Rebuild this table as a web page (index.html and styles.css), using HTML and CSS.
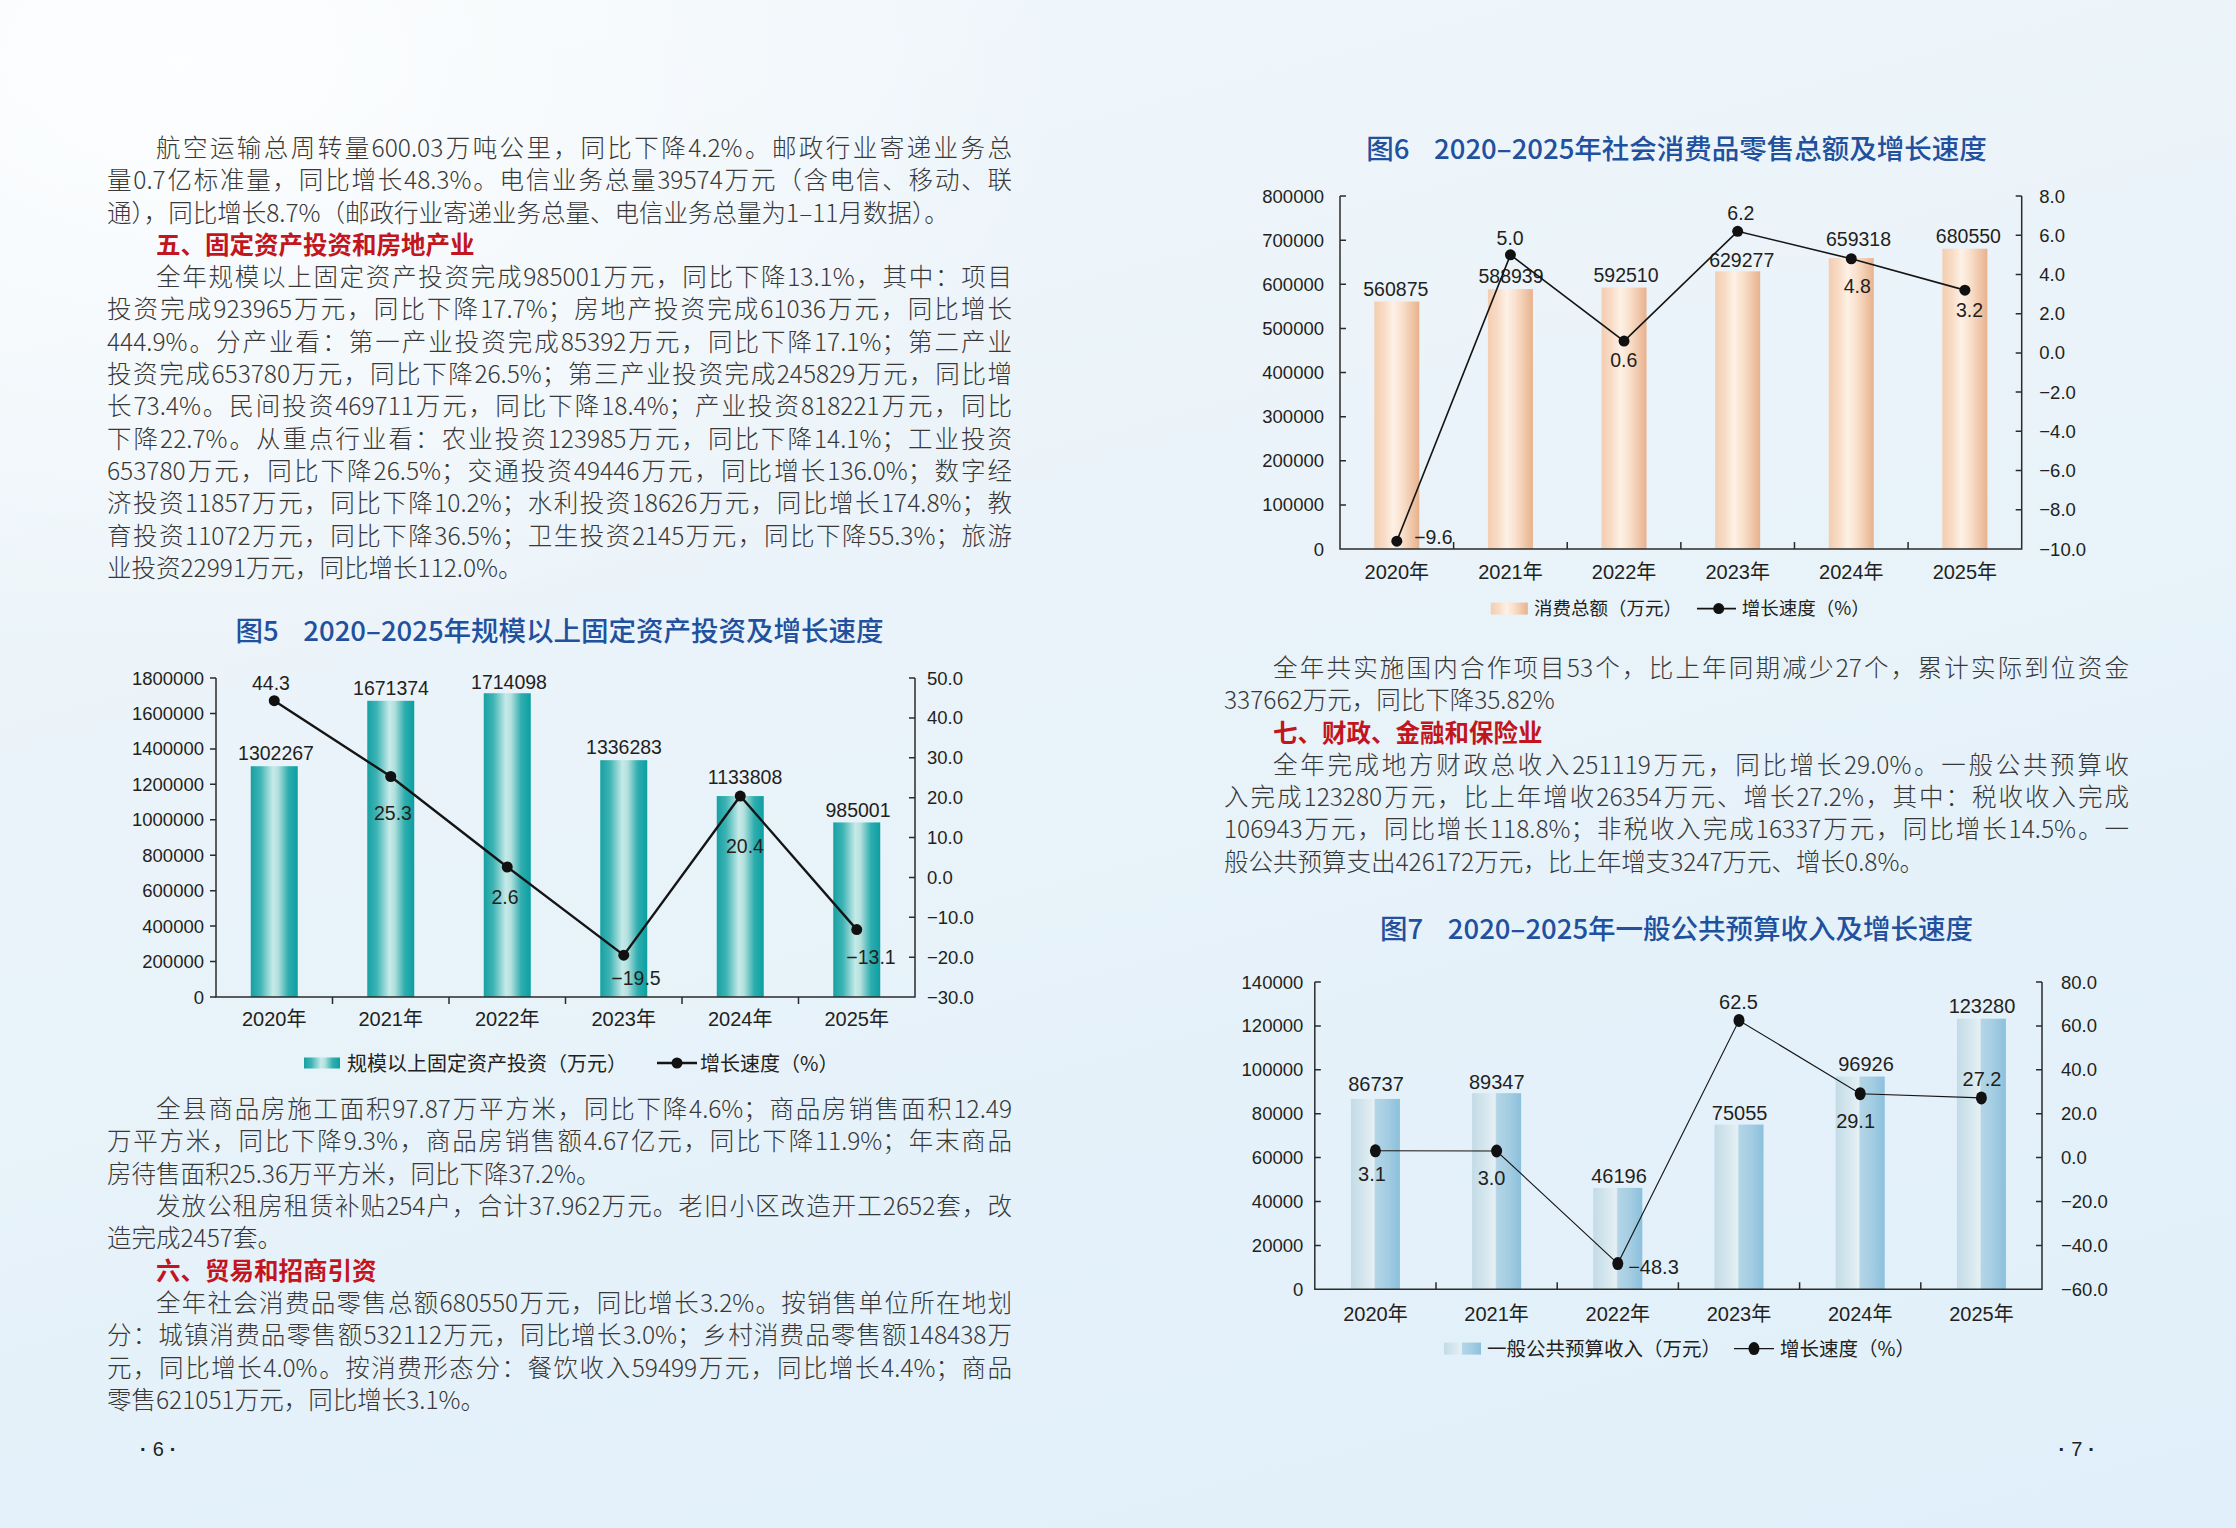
FILE: index.html
```html
<!DOCTYPE html>
<html lang="zh-CN">
<head>
<meta charset="utf-8">
<title>统计公报 6-7</title>
<link rel="stylesheet" href="styles.css">
</head>
<body>
<div class="spread">
  <section class="page page-left">
    <p class="text">
      <span class="ln first">航空运输总周转量600.03万吨公里，同比下降4.2%。邮政行业寄递业务总</span>
      <span class="ln">量0.7亿标准量，同比增长48.3%。电信业务总量39574万元（含电信、移动、联</span>
      <span class="ln last">通），同比增长8.7%（邮政行业寄递业务总量、电信业务总量为1–11月数据）。</span>
    </p>
    <h2 class="sec">五、固定资产投资和房地产业</h2>
    <p class="text">
      <span class="ln first">全年规模以上固定资产投资完成985001万元，同比下降13.1%，其中：项目</span>
      <span class="ln">投资完成923965万元，同比下降17.7%；房地产投资完成61036万元，同比增长</span>
      <span class="ln">444.9%。分产业看：第一产业投资完成85392万元，同比下降17.1%；第二产业</span>
      <span class="ln">投资完成653780万元，同比下降26.5%；第三产业投资完成245829万元，同比增</span>
      <span class="ln">长73.4%。民间投资469711万元，同比下降18.4%；产业投资818221万元，同比</span>
      <span class="ln">下降22.7%。从重点行业看：农业投资123985万元，同比下降14.1%；工业投资</span>
      <span class="ln">653780万元，同比下降26.5%；交通投资49446万元，同比增长136.0%；数字经</span>
      <span class="ln">济投资11857万元，同比下降10.2%；水利投资18626万元，同比增长174.8%；教</span>
      <span class="ln">育投资11072万元，同比下降36.5%；卫生投资2145万元，同比下降55.3%；旅游</span>
      <span class="ln last">业投资22991万元，同比增长112.0%。</span>
    </p>

    <h3 class="fig-title fig5-title"><span class="fig-no">图5</span>2020–2025年规模以上固定资产投资及增长速度</h3>
    <svg class="chart" width="905" height="445" viewBox="0 0 905 445">
      <defs>
        <linearGradient id="g5" x1="0" x2="1" y1="0" y2="0">
          <stop offset="0" stop-color="#17a1a3"/>
          <stop offset="0.2" stop-color="#3db3b4"/>
          <stop offset="0.47" stop-color="#c6eae8"/>
          <stop offset="0.58" stop-color="#b3e0de"/>
          <stop offset="0.8" stop-color="#2eadae"/>
          <stop offset="1" stop-color="#0b9fa2"/>
        </linearGradient>
      </defs>
      <g fill="url(#g5)">
        <rect x="143.75" y="119.21" width="47" height="230.79"/>
        <rect x="260.25" y="53.80" width="47" height="296.20"/>
        <rect x="376.75" y="46.23" width="47" height="303.77"/>
        <rect x="493.25" y="113.18" width="47" height="236.82"/>
        <rect x="609.75" y="149.07" width="47" height="200.93"/>
        <rect x="726.25" y="175.44" width="47" height="174.56"/>
      </g>
      <path class="axis" d="M109 31 V350 H808 V31"/>
      <path class="axis" d="M103 31H109M103 66.44H109M103 101.89H109M103 137.33H109M103 172.78H109M103 208.22H109M103 243.67H109M103 279.11H109M103 314.56H109M103 350H109"/>
      <path class="axis" d="M802 31H808M802 70.88H808M802 110.75H808M802 150.63H808M802 190.5H808M802 230.38H808M802 270.25H808M802 310.13H808"/>
      <path class="axis" d="M225.5 350V357M342 350V357M458.5 350V357M575 350V357M691.5 350V357"/>
      <g class="ax" text-anchor="end">
        <text x="97" y="37.5">1800000</text>
        <text x="97" y="72.9">1600000</text>
        <text x="97" y="108.4">1400000</text>
        <text x="97" y="143.8">1200000</text>
        <text x="97" y="179.3">1000000</text>
        <text x="97" y="214.7">800000</text>
        <text x="97" y="250.2">600000</text>
        <text x="97" y="285.6">400000</text>
        <text x="97" y="321.1">200000</text>
        <text x="97" y="356.5">0</text>
      </g>
      <g class="ax">
        <text x="820" y="37.5">50.0</text>
        <text x="820" y="77.4">40.0</text>
        <text x="820" y="117.3">30.0</text>
        <text x="820" y="157.1">20.0</text>
        <text x="820" y="197">10.0</text>
        <text x="820" y="236.9">0.0</text>
        <text x="820" y="276.8">−10.0</text>
        <text x="820" y="316.6">−20.0</text>
        <text x="820" y="356.5">−30.0</text>
      </g>
      <g class="val" text-anchor="middle">
        <text x="169" y="113">1302267</text>
        <text x="284" y="48">1671374</text>
        <text x="402" y="42">1714098</text>
        <text x="517" y="107">1336283</text>
        <text x="638" y="137">1133808</text>
        <text x="751" y="170">985001</text>
      </g>
      <polyline class="trend thick" points="167.25,53.73 283.75,129.49 400.25,220 516.75,308.13 633.25,149.03 749.75,282.61"/>
      <g class="dot">
        <circle cx="167.25" cy="53.73" r="5.5"/>
        <circle cx="283.75" cy="129.49" r="5.5"/>
        <circle cx="400.25" cy="220" r="5.5"/>
        <circle cx="516.75" cy="308.13" r="5.5"/>
        <circle cx="633.25" cy="149.03" r="5.5"/>
        <circle cx="749.75" cy="282.61" r="5.5"/>
      </g>
      <g class="val" text-anchor="middle">
        <text x="164" y="43">44.3</text>
        <text x="286" y="173">25.3</text>
        <text x="398" y="257">2.6</text>
        <text x="529" y="338">−19.5</text>
        <text x="638" y="206">20.4</text>
        <text x="764" y="317">−13.1</text>
      </g>
      <g class="yr" text-anchor="middle">
        <text x="167.25" y="379">2020年</text>
        <text x="283.75" y="379">2021年</text>
        <text x="400.25" y="379">2022年</text>
        <text x="516.75" y="379">2023年</text>
        <text x="633.25" y="379">2024年</text>
        <text x="749.75" y="379">2025年</text>
      </g>
      <rect x="197" y="410.5" width="36" height="11" fill="url(#g5)"/>
      <text class="lg lg5" x="240" y="423.5">规模以上固定资产投资（万元）</text>
      <path class="trend thick" d="M550 416H590"/>
      <circle class="dot" cx="570" cy="416" r="5.5"/>
      <text class="lg lg5" x="593" y="423.5">增长速度（%）</text>
    </svg>

    <p class="text">
      <span class="ln first">全县商品房施工面积97.87万平方米，同比下降4.6%；商品房销售面积12.49</span>
      <span class="ln">万平方米，同比下降9.3%，商品房销售额4.67亿元，同比下降11.9%；年末商品</span>
      <span class="ln last">房待售面积25.36万平方米，同比下降37.2%。</span>
    </p>
    <p class="text">
      <span class="ln first">发放公租房租赁补贴254户，合计37.962万元。老旧小区改造开工2652套，改</span>
      <span class="ln last">造完成2457套。</span>
    </p>
    <h2 class="sec">六、贸易和招商引资</h2>
    <p class="text">
      <span class="ln first">全年社会消费品零售总额680550万元，同比增长3.2%。按销售单位所在地划</span>
      <span class="ln">分：城镇消费品零售额532112万元，同比增长3.0%；乡村消费品零售额148438万</span>
      <span class="ln">元，同比增长4.0%。按消费形态分：餐饮收入59499万元，同比增长4.4%；商品</span>
      <span class="ln last">零售621051万元，同比增长3.1%。</span>
    </p>
    <div class="folio folio-left">·<span class="folio-num">6</span>·</div>
  </section>

  <section class="page page-right">
    <h3 class="fig-title"><span class="fig-no">图6</span>2020–2025年社会消费品零售总额及增长速度</h3>
    <svg class="chart" width="905" height="486" viewBox="0 0 905 486">
      <defs>
        <linearGradient id="g6" x1="0" x2="1" y1="0" y2="0">
          <stop offset="0" stop-color="#f3cdb0"/>
          <stop offset="0.22" stop-color="#f8dcc6"/>
          <stop offset="0.42" stop-color="#fdf1e6"/>
          <stop offset="0.62" stop-color="#f9e0cb"/>
          <stop offset="1" stop-color="#e8b28d"/>
        </linearGradient>
      </defs>
      <g fill="url(#g6)">
        <rect x="150.31" y="136.51" width="45" height="247.49"/>
        <rect x="263.93" y="124.13" width="45" height="259.87"/>
        <rect x="377.54" y="122.56" width="45" height="261.44"/>
        <rect x="491.16" y="106.33" width="45" height="277.67"/>
        <rect x="604.78" y="93.08" width="45" height="290.92"/>
        <rect x="718.39" y="83.71" width="45" height="300.29"/>
      </g>
      <path class="axis" d="M116 31 V384 H797.7 V31"/>
      <path class="axis" d="M116 31H122M116 75.13H122M116 119.25H122M116 163.38H122M116 207.5H122M116 251.63H122M116 295.75H122M116 339.88H122"/>
      <path class="axis" d="M791.7 31H797.7M791.7 70.22H797.7M791.7 109.44H797.7M791.7 148.67H797.7M791.7 187.89H797.7M791.7 227.11H797.7M791.7 266.33H797.7M791.7 305.56H797.7M791.7 344.78H797.7"/>
      <path class="axis" d="M229.62 384V377M343.23 384V377M456.85 384V377M570.47 384V377M684.08 384V377"/>
      <g class="ax" text-anchor="end">
        <text x="100" y="37.5">800000</text>
        <text x="100" y="81.6">700000</text>
        <text x="100" y="125.8">600000</text>
        <text x="100" y="169.9">500000</text>
        <text x="100" y="214">400000</text>
        <text x="100" y="258.1">300000</text>
        <text x="100" y="302.3">200000</text>
        <text x="100" y="346.4">100000</text>
        <text x="100" y="390.5">0</text>
      </g>
      <g class="ax">
        <text x="815.3" y="37.5">8.0</text>
        <text x="815.3" y="76.7">6.0</text>
        <text x="815.3" y="115.9">4.0</text>
        <text x="815.3" y="155.2">2.0</text>
        <text x="815.3" y="194.4">0.0</text>
        <text x="815.3" y="233.6">−2.0</text>
        <text x="815.3" y="272.8">−4.0</text>
        <text x="815.3" y="312.1">−6.0</text>
        <text x="815.3" y="351.3">−8.0</text>
        <text x="815.3" y="390.5">−10.0</text>
      </g>
      <g class="val" text-anchor="middle">
        <text x="171.8" y="131.2">560875</text>
        <text x="287" y="117.7">588939</text>
        <text x="402" y="116.6">592510</text>
        <text x="517.7" y="102.4">629277</text>
        <text x="634.5" y="80.5">659318</text>
        <text x="744.4" y="78.1">680550</text>
      </g>
      <polyline class="trend mid" points="172.81,376.16 286.43,89.83 400.04,176.12 513.66,66.3 627.28,93.76 740.89,125.13"/>
      <g class="dot">
        <circle cx="172.81" cy="376.16" r="5.5"/>
        <circle cx="286.43" cy="89.83" r="5.5"/>
        <circle cx="400.04" cy="176.12" r="5.5"/>
        <circle cx="513.66" cy="66.3" r="5.5"/>
        <circle cx="627.28" cy="93.76" r="5.5"/>
        <circle cx="740.89" cy="125.13" r="5.5"/>
      </g>
      <g class="val" text-anchor="middle">
        <text x="209.4" y="378.6">−9.6</text>
        <text x="286.1" y="79.8">5.0</text>
        <text x="399.8" y="202.2">0.6</text>
        <text x="516.9" y="55.1">6.2</text>
        <text x="633.3" y="127.8">4.8</text>
        <text x="745.5" y="152.1">3.2</text>
      </g>
      <g class="yr" text-anchor="middle">
        <text x="172.81" y="413.7">2020年</text>
        <text x="286.43" y="413.7">2021年</text>
        <text x="400.04" y="413.7">2022年</text>
        <text x="513.66" y="413.7">2023年</text>
        <text x="627.28" y="413.7">2024年</text>
        <text x="740.89" y="413.7">2025年</text>
      </g>
      <rect x="266.8" y="437.6" width="37" height="12" fill="url(#g6)"/>
      <text class="lg lg6" x="310" y="450.4">消费总额（万元）</text>
      <path class="trend mid" d="M473 443.6H512"/>
      <circle class="dot" cx="494.7" cy="443.6" r="5.5"/>
      <text class="lg lg6" x="517.8" y="450.4">增长速度（%）</text>
    </svg>

    <p class="text">
      <span class="ln first">全年共实施国内合作项目53个，比上年同期减少27个，累计实际到位资金</span>
      <span class="ln last">337662万元，同比下降35.82%</span>
    </p>
    <h2 class="sec">七、财政、金融和保险业</h2>
    <p class="text">
      <span class="ln first">全年完成地方财政总收入251119万元，同比增长29.0%。一般公共预算收</span>
      <span class="ln">入完成123280万元，比上年增收26354万元、增长27.2%，其中：税收收入完成</span>
      <span class="ln">106943万元，同比增长118.8%；非税收入完成16337万元，同比增长14.5%。一</span>
      <span class="ln last">般公共预算支出426172万元，比上年增支3247万元、增长0.8%。</span>
    </p>

    <h3 class="fig-title fig7-title"><span class="fig-no">图7</span>2020–2025年一般公共预算收入及增长速度</h3>
    <svg class="chart" width="905" height="425" viewBox="0 0 905 425">
      <defs>
        <linearGradient id="g7" x1="0" x2="1" y1="0" y2="0">
          <stop offset="0" stop-color="#c3dbe6"/>
          <stop offset="0.28" stop-color="#d6e7ee"/>
          <stop offset="0.47" stop-color="#e6f0f4"/>
          <stop offset="0.5" stop-color="#b3d5e6"/>
          <stop offset="0.75" stop-color="#a4cde2"/>
          <stop offset="1" stop-color="#8bc0dc"/>
        </linearGradient>
      </defs>
      <g fill="url(#g7)">
        <rect x="126.9" y="153.91" width="49" height="190.39"/>
        <rect x="248.1" y="148.18" width="49" height="196.12"/>
        <rect x="369.3" y="242.9" width="49" height="101.4"/>
        <rect x="490.5" y="179.56" width="49" height="164.74"/>
        <rect x="611.7" y="131.55" width="49" height="212.75"/>
        <rect x="732.9" y="73.7" width="49" height="270.6"/>
      </g>
      <path class="axis" d="M90.8 37 V344.3 H818 V37"/>
      <path class="axis" d="M90.8 37H96.8M90.8 80.9H96.8M90.8 124.8H96.8M90.8 168.7H96.8M90.8 212.6H96.8M90.8 256.5H96.8M90.8 300.4H96.8"/>
      <path class="axis" d="M812 37H818M812 80.9H818M812 124.8H818M812 168.7H818M812 212.6H818M812 256.5H818M812 300.4H818"/>
      <path class="axis" d="M212 344.3V337.3M333.2 344.3V337.3M454.4 344.3V337.3M575.6 344.3V337.3M696.8 344.3V337.3"/>
      <g class="ax" text-anchor="end">
        <text x="79.3" y="43.5">140000</text>
        <text x="79.3" y="87.4">120000</text>
        <text x="79.3" y="131.3">100000</text>
        <text x="79.3" y="175.2">80000</text>
        <text x="79.3" y="219.1">60000</text>
        <text x="79.3" y="263">40000</text>
        <text x="79.3" y="306.9">20000</text>
        <text x="79.3" y="350.8">0</text>
      </g>
      <g class="ax">
        <text x="837" y="43.5">80.0</text>
        <text x="837" y="87.4">60.0</text>
        <text x="837" y="131.3">40.0</text>
        <text x="837" y="175.2">20.0</text>
        <text x="837" y="219.1">0.0</text>
        <text x="837" y="263">−20.0</text>
        <text x="837" y="306.9">−40.0</text>
        <text x="837" y="350.8">−60.0</text>
      </g>
      <g class="val val7" text-anchor="middle">
        <text x="152" y="146.3">86737</text>
        <text x="272.8" y="144">89347</text>
        <text x="395" y="238.3">46196</text>
        <text x="515.6" y="175">75055</text>
        <text x="642" y="126.3">96926</text>
        <text x="758" y="68.3">123280</text>
      </g>
      <polyline class="trend thin" points="151.4,205.8 272.6,206 393.8,318.62 515,75.41 636.2,148.72 757.4,152.9"/>
      <g class="dot">
        <ellipse cx="151.4" cy="205.8" rx="5.5" ry="6.5"/>
        <ellipse cx="272.6" cy="206" rx="5.5" ry="6.5"/>
        <ellipse cx="393.8" cy="318.62" rx="5.5" ry="6.5"/>
        <ellipse cx="515" cy="75.41" rx="5.5" ry="6.5"/>
        <ellipse cx="636.2" cy="148.72" rx="5.5" ry="6.5"/>
        <ellipse cx="757.4" cy="152.9" rx="5.5" ry="6.5"/>
      </g>
      <g class="val val7" text-anchor="middle">
        <text x="148" y="235.6">3.1</text>
        <text x="267.6" y="239.6">3.0</text>
        <text x="429.5" y="329">−48.3</text>
        <text x="514.5" y="64">62.5</text>
        <text x="631.6" y="183">29.1</text>
        <text x="758" y="140.6">27.2</text>
      </g>
      <g class="yr" text-anchor="middle">
        <text x="151.4" y="375.6">2020年</text>
        <text x="272.6" y="375.6">2021年</text>
        <text x="393.8" y="375.6">2022年</text>
        <text x="515" y="375.6">2023年</text>
        <text x="636.2" y="375.6">2024年</text>
        <text x="757.4" y="375.6">2025年</text>
      </g>
      <rect x="220" y="397.6" width="37" height="12" fill="url(#g7)"/>
      <text class="lg lg7" x="263" y="410.8">一般公共预算收入（万元）</text>
      <path class="trend thin" d="M510 403.6H550"/>
      <ellipse class="dot" cx="530" cy="403.6" rx="5.5" ry="6.5"/>
      <text class="lg lg7" x="556" y="410.8">增长速度（%）</text>
    </svg>
    <div class="folio folio-right">·<span class="folio-num">7</span>·</div>
  </section>
</div>
</body>
</html>
```

FILE: styles.css
```css
* { box-sizing: border-box; }

html, body {
  margin: 0;
  padding: 0;
}

body {
  width: 2236px;
  height: 1528px;
  overflow: hidden;
  background:
    radial-gradient(ellipse 900px 600px at 8% 4%, rgba(255, 255, 255, 0.85), rgba(255, 255, 255, 0) 100%),
    linear-gradient(165deg, #f1f7fb 0%, #eaf3f9 40%, #e4f1fa 72%, #e0eff9 100%);
  font-family: "Noto Sans CJK SC", "Noto Sans", sans-serif;
  color: #3a3a3a;
}

.spread {
  display: flex;
  width: 2236px;
  height: 1528px;
}

.page {
  width: 1118px;
  height: 1528px;
  display: flex;
  flex-direction: column;
  padding-bottom: 63px;
}

.page-left {
  padding-top: 131px;
  padding-left: 107px;
  padding-right: 106px;
}

.page-right {
  padding-top: 129px;
  padding-left: 106px;
  padding-right: 107px;
}

.text {
  margin: 0;
  font-size: 24.5px;
  line-height: 32.3px;
  font-weight: 300;
  color: #383838;
}

.ln {
  display: block;
  text-align: justify;
  text-align-last: justify;
}

.ln.first {
  text-indent: 2em;
}

.ln.last {
  text-align-last: left;
}

.sec {
  margin: 0;
  font-size: 24.5px;
  line-height: 32.3px;
  font-weight: 700;
  color: #c2151d;
  text-indent: 2em;
}

.fig-title {
  margin: 28px 0 0;
  font-size: 27.5px;
  line-height: 36px;
  font-weight: 500;
  color: #21509e;
  text-align: center;
}

.page-right .fig-title {
  margin-top: 0;
}

.page-right .fig7-title {
  margin-top: 31.6px;
}

.fig-no {
  margin-right: 0.9em;
}

.chart {
  display: block;
  flex: none;
  overflow: visible;
}

.axis {
  fill: none;
  stroke: #2b2b2b;
  stroke-width: 1.5;
}

.trend {
  fill: none;
  stroke: #151515;
}

.trend.thick { stroke-width: 2.4; }
.trend.mid { stroke-width: 1.6; }
.trend.thin { stroke-width: 1.1; }

.dot {
  fill: #111;
}

.ax {
  font-family: "Liberation Sans", Arial, sans-serif;
  font-size: 18.5px;
  fill: #231f20;
}

.val {
  font-family: "Liberation Sans", Arial, sans-serif;
  font-size: 19.5px;
  fill: #231f20;
}

.val7 {
  font-size: 20px;
}

.yr {
  font-family: "Liberation Sans", "Noto Sans CJK SC", sans-serif;
  font-size: 20px;
  fill: #231f20;
}

.lg {
  font-family: "Noto Sans CJK SC", sans-serif;
  fill: #231f20;
}

.lg5 { font-size: 20px; }
.lg6 { font-size: 18.5px; }
.lg7 { font-size: 19.5px; }

.folio {
  margin-top: auto;
  font-family: "Liberation Sans", Arial, sans-serif;
  font-size: 20px;
  line-height: 32px;
  color: #222;
  font-weight: 700;
}

.folio-num {
  font-weight: 400;
  margin: 0 6px;
}

.folio-left {
  padding-left: 33px;
}

.folio-right {
  text-align: right;
  padding-right: 34px;
}
```
